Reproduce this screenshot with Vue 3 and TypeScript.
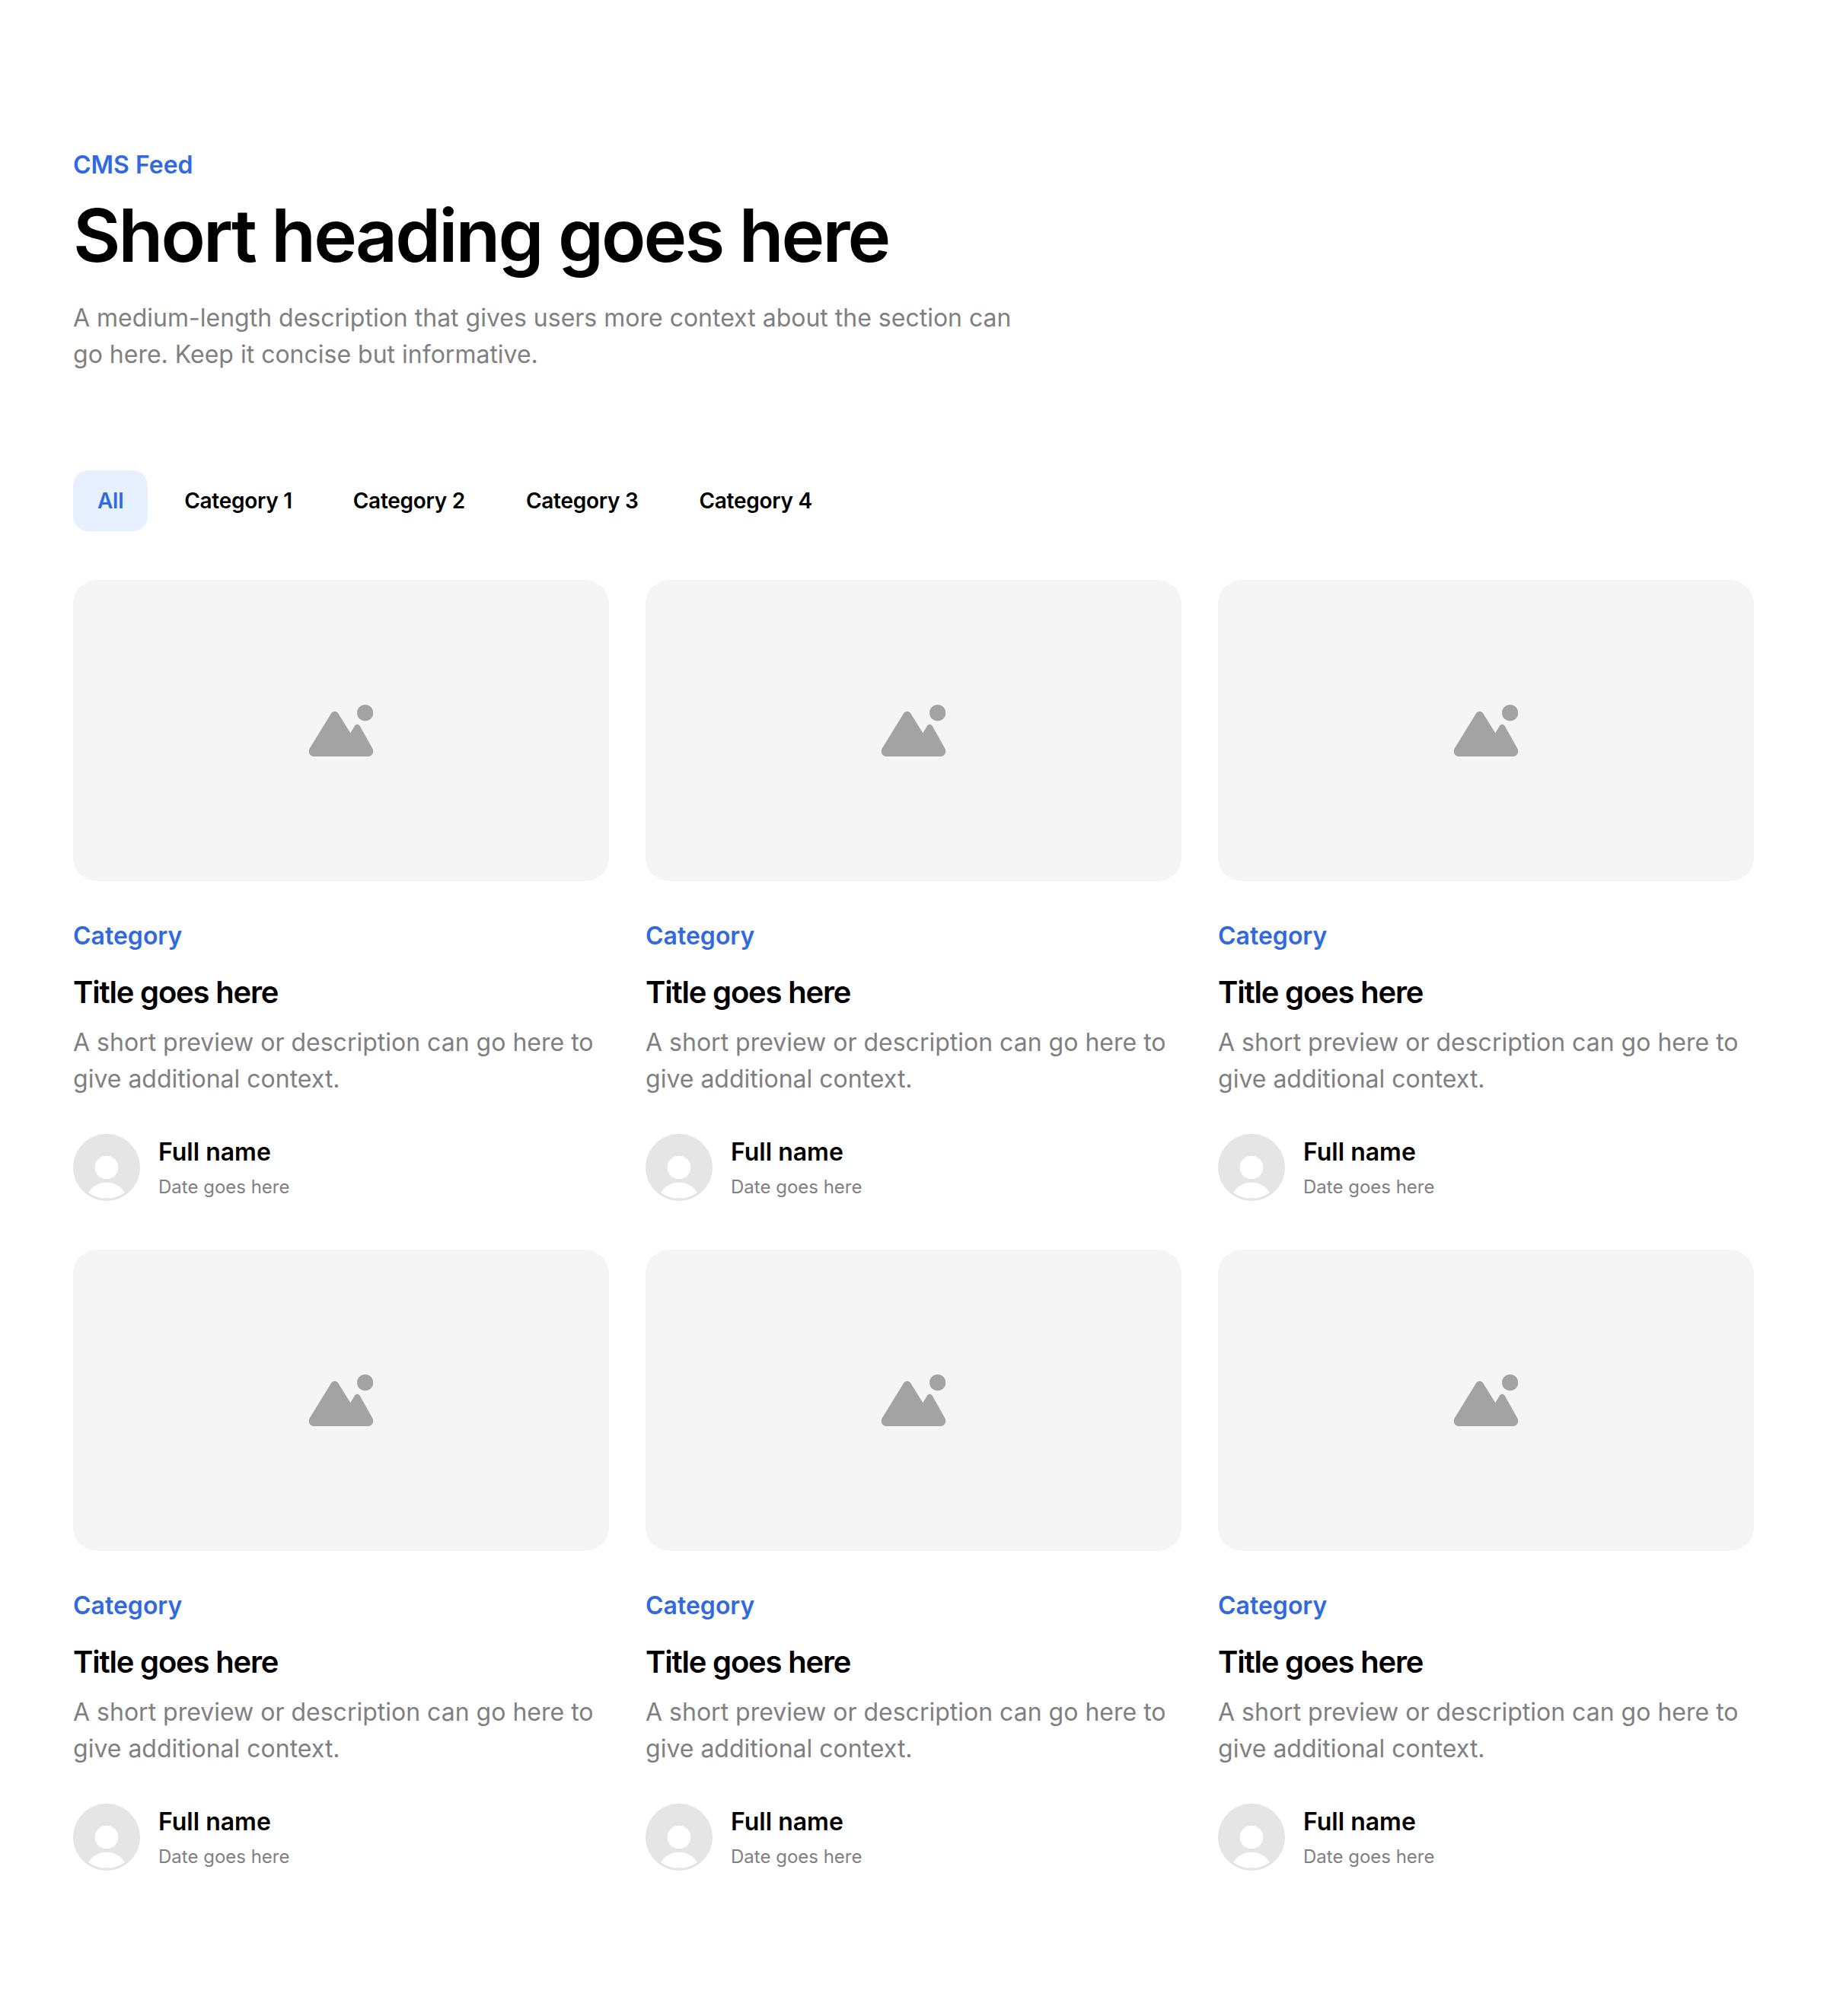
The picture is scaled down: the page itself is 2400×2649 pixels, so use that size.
<script setup lang="ts">
import { ref } from 'vue'

interface Post {
  id: number
  category: string
  title: string
  preview: string
  author: string
  date: string
}

const tabs = ['All', 'Category 1', 'Category 2', 'Category 3', 'Category 4']
const active = ref('All')

const posts: Post[] = Array.from({ length: 6 }, (_, i) => ({
  id: i + 1,
  category: 'Category',
  title: 'Title goes here',
  preview: 'A short preview or description can go here to give additional context.',
  author: 'Full name',
  date: 'Date goes here',
}))
</script>

<template>
  <main class="feed">
    <header class="intro">
      <p class="eyebrow">CMS Feed</p>
      <h1 class="heading">Short heading goes here</h1>
      <p class="lead">
        A medium-length description that gives users more context about the section can go here. Keep it concise but
        informative.
      </p>
    </header>

    <nav class="tabs">
      <button
        v-for="tab in tabs"
        :key="tab"
        type="button"
        class="tab"
        :class="{ 'tab--active': tab === active }"
        @click="active = tab"
      >
        {{ tab }}
      </button>
    </nav>

    <section class="grid">
      <article v-for="post in posts" :key="post.id" class="card">
        <div class="thumb">
          <svg class="thumb-icon" viewBox="0 0 252 204" aria-hidden="true">
            <path
              d="M88 33C93 24 108 24 114 33L163 112L180 83C184 75 195 75 200 83L249 171C258 186 249 204 231 204H21C3 204-6 186 3 171Z"
            />
            <circle cx="221" cy="32" r="32" />
          </svg>
        </div>
        <p class="eyebrow">{{ post.category }}</p>
        <h2 class="title">{{ post.title }}</h2>
        <p class="preview">{{ post.preview }}</p>
        <footer class="author">
          <svg class="avatar" viewBox="0 0 264 264" aria-hidden="true">
            <circle cx="132" cy="132" r="132" fill="#e5e5e5" />
            <circle cx="132" cy="132" r="46" fill="#fff" />
            <path d="M60 230C78 205 104 191 132 191S186 205 204 230C184 246 159 253 132 253S80 246 60 230Z" fill="#fff" />
          </svg>
          <div class="byline">
            <span class="name">{{ post.author }}</span>
            <span class="date">{{ post.date }}</span>
          </div>
        </footer>
      </article>
    </section>
  </main>
</template>

<style>
body {
  margin: 0;
  background: #fff;
}
</style>

<style scoped>
.feed {
  box-sizing: border-box;
  height: 2649px;
  padding: 193px 96px 0;
  overflow: hidden;
  background: #fff;
  color: #000;
  font-family: Inter, 'Liberation Sans', sans-serif;
}

.eyebrow,
.heading,
.lead,
.title,
.preview {
  margin: 0;
}

.intro {
  width: 1280px;
}

.eyebrow {
  color: #3069e0;
  font-size: 32px;
  font-weight: 600;
  line-height: 48px;
}

.heading {
  margin-top: 16px;
  font-size: 96px;
  font-weight: 600;
  line-height: 1.1;
  letter-spacing: -0.03em;
}

.lead {
  margin-top: 31px;
  color: #808080;
  font-size: 32px;
  line-height: 48px;
}

.tabs {
  display: flex;
  gap: 16px;
  margin-top: 128px;
}

.tab {
  height: 80px;
  padding: 0 32px;
  border: 0;
  border-radius: 20px;
  background: transparent;
  color: #000;
  font: inherit;
  font-size: 28px;
  font-weight: 600;
  letter-spacing: -0.01em;
}

.tab--active {
  background: #e6f0ff;
  color: #3069e0;
}

.grid {
  display: grid;
  grid-template-columns: repeat(3, 1fr);
  gap: 64px 48px;
  margin-top: 64px;
}

.thumb {
  display: flex;
  align-items: center;
  justify-content: center;
  height: 396px;
  margin-bottom: 48px;
  border-radius: 32px;
  background: #f5f5f5;
}

.thumb-icon {
  width: 84px;
  height: 68px;
  fill: #a3a3a3;
}

.title {
  margin-top: 24px;
  font-size: 40px;
  font-weight: 600;
  line-height: 52px;
  letter-spacing: -0.03em;
}

.preview {
  margin-top: 16px;
  color: #808080;
  font-size: 32px;
  line-height: 48px;
}

.author {
  display: flex;
  align-items: center;
  gap: 24px;
  margin-top: 48px;
}

.avatar {
  width: 88px;
  height: 88px;
}

.byline {
  display: flex;
  flex-direction: column;
  gap: 4px;
}

.name {
  font-size: 32px;
  font-weight: 600;
  line-height: 48px;
}

.date {
  color: #808080;
  font-size: 24px;
  line-height: 36px;
}
</style>
